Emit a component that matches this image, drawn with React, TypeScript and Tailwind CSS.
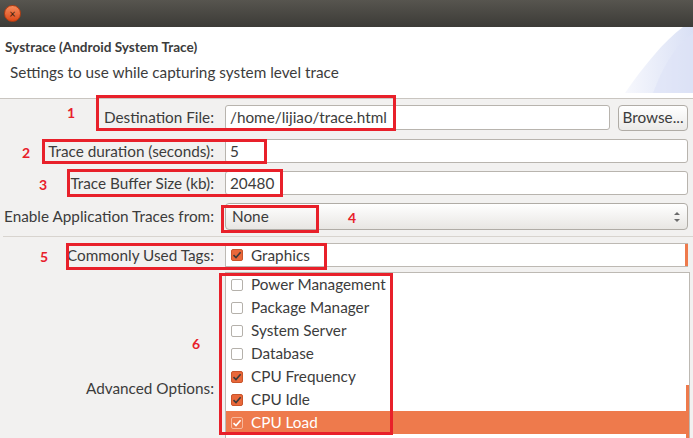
const tags = [
  { name: 'Power Management', checked: false },
  { name: 'Package Manager', checked: false },
  { name: 'System Server', checked: false },
  { name: 'Database', checked: false },
  { name: 'CPU Frequency', checked: true },
  { name: 'CPU Idle', checked: true },
  { name: 'CPU Load', checked: true, selected: true },
];

function Check({ checked, selected }: { checked: boolean; selected?: boolean }) {
  if (!checked) {
    return <span className="w-[12px] h-[12px] rounded-[2px] border border-[#b5b1ab] bg-white shrink-0" />;
  }
  return (
    <span
      className={`w-[12px] h-[12px] rounded-[2px] shrink-0 flex items-center justify-center ${
        selected ? 'bg-[#ee7a4c] border border-[#f7b89c]' : 'bg-[#e9683a] border border-[#c9552b]'
      }`}
    >
      <svg width="10" height="10" viewBox="0 0 10 10">
        <path
          d="M1.5 5.2 L4 7.6 L8.6 2.2"
          fill="none"
          stroke={selected ? '#ffffff' : '#3b3b3b'}
          strokeWidth="1.6"
        />
      </svg>
    </span>
  );
}

function Label({ children }: { children: React.ReactNode }) {
  return <div className="w-[215px] shrink-0 text-right pr-[1px] whitespace-nowrap">{children}</div>;
}

function Mark({ n, className }: { n: string; className: string }) {
  return <span className={`absolute text-[14px] font-bold text-[#e8202a] leading-none ${className}`}>{n}</span>;
}

function Box({ className }: { className: string }) {
  return <div className={`absolute border-[3px] border-[#e8202a] ${className}`} />;
}

function Swoosh() {
  return (
    <svg className="absolute right-0 top-0" width="80" height="72" viewBox="0 0 80 72">
      <defs>
        <linearGradient id="sw" x1="0" y1="0" x2="1" y2="0">
          <stop offset="0" stopColor="#f7f8fd" />
          <stop offset="1" stopColor="#d9e0f5" />
        </linearGradient>
      </defs>
      <path d="M12 66 C 30 40, 50 15, 70 0 L 80 0 L 80 66 Z" fill="url(#sw)" />
      <path d="M40 66 C 50 40, 62 18, 80 6 L 80 66 Z" fill="#dde3f6" opacity="0.6" />
    </svg>
  );
}

export default function App() {
  return (
    <div
      className="relative w-[693px] h-[438px] overflow-hidden bg-[#f2f1f0] text-[#3c3c3c] text-[15.3px]"
      style={{ fontFamily: 'Lato, "Open Sans", sans-serif' }}
    >
      {/* window title bar */}
      <div className="h-[27px] bg-gradient-to-b from-[#57554f] to-[#3c3b37] flex items-center pl-[4px]">
        <div className="w-[17px] h-[17px] rounded-full bg-gradient-to-b from-[#f58a5a] to-[#dd4814] border border-[#b83c10] flex items-center justify-center text-[#3a1a0a] text-[11px] leading-none">
          ×
        </div>
      </div>

      {/* header */}
      <div className="relative h-[72px] bg-white border-b border-[#c9c5c0]">
        <Swoosh />
        <div className="relative pl-[5px] pt-[10px] font-bold text-[13.6px]">Systrace (Android System Trace)</div>
        <div className="relative pl-[10px] pt-[4px]">Settings to use while capturing system level trace</div>
      </div>

      {/* form */}
      <div className="flex flex-col pt-[6px] pr-[5px]">
        <div className="flex items-center gap-[10px] h-[25px]">
          <Label>Destination File:</Label>
          <div className="flex-1 h-[25px] bg-white border border-[#b8b4ae] rounded-[3px] flex items-center px-[4px]">
            /home/lijiao/trace.html
          </div>
          <button className="w-[70px] h-[26px] ml-[-2px] rounded-[4px] border border-[#b0aca6] bg-gradient-to-b from-white to-[#ebeae8]">
            Browse...
          </button>
        </div>

        <div className="flex items-center gap-[10px] h-[24px] mt-[9px]">
          <Label>Trace duration (seconds):</Label>
          <div className="flex-1 h-[24px] bg-white border border-[#b8b4ae] rounded-[3px] flex items-center px-[4px]">5</div>
        </div>

        <div className="flex items-center gap-[10px] h-[24px] mt-[8px]">
          <Label>Trace Buffer Size (kb):</Label>
          <div className="flex-1 h-[24px] bg-white border border-[#b8b4ae] rounded-[3px] flex items-center px-[4px]">20480</div>
        </div>

        <div className="flex items-center gap-[10px] h-[27px] mt-[8px]">
          <Label>Enable Application Traces from:</Label>
          <div className="flex-1 h-[27px] border border-[#b0aca6] rounded-[4px] bg-gradient-to-b from-white to-[#e8e6e3] flex items-center px-[6px] justify-between">
            <span>None</span>
            <svg width="8" height="14" viewBox="0 0 8 14">
              <path d="M1 5 L4 2 L7 5 Z" fill="#6b6b6b" />
              <path d="M1 9 L4 12 L7 9 Z" fill="#6b6b6b" />
            </svg>
          </div>
        </div>

        <div className="h-[1px] bg-[#d8d4cf] mt-[6px] ml-[3px] mr-[-5px]" />

        <div className="flex items-center gap-[10px] h-[24px] mt-[6px]">
          <Label>Commonly Used Tags:</Label>
          <div className="relative flex-1 h-[24px] bg-white border border-[#bdb9b3] flex items-center gap-[8px] pl-[5px]">
            <Check checked />
            <span>Graphics</span>
            <div className="absolute right-[-1px] top-0 bottom-0 w-[3px] bg-[#ee7a4c]" />
          </div>
        </div>

        <div className="flex items-center gap-[10px] mt-[5px] mr-[-2px]">
          <div className="pt-[5px]">
            <Label>Advanced Options:</Label>
          </div>
          <div className="relative flex-1 h-[228px] bg-white border border-[#bdb9b3]">
            {tags.map((t) => (
              <div
                key={t.name}
                className={`h-[23px] flex items-center gap-[8px] pl-[5px] ${
                  t.selected ? 'bg-[#ee7a4c] text-white' : ''
                }`}
              >
                <Check checked={t.checked} selected={t.selected} />
                <span>{t.name}</span>
              </div>
            ))}
            <div className="absolute right-0 top-[112px] h-[120px] w-[3px] bg-[#ee7a4c]" />
          </div>
        </div>
      </div>

      {/* annotations */}
      <Box className="left-[96px] top-[95px] w-[300px] h-[36px]" />
      <Mark n="1" className="left-[67px] top-[106px]" />
      <Box className="left-[42px] top-[139px] w-[225px] h-[25px]" />
      <Mark n="2" className="left-[22px] top-[146px]" />
      <Box className="left-[67px] top-[169px] w-[216px] h-[28px]" />
      <Mark n="3" className="left-[39px] top-[178px]" />
      <Box className="left-[221px] top-[205px] w-[98px] h-[28px]" />
      <Mark n="4" className="left-[348px] top-[211px]" />
      <Box className="left-[66px] top-[243px] w-[261px] h-[27px]" />
      <Mark n="5" className="left-[40px] top-[250px]" />
      <Box className="left-[219px] top-[273px] w-[174px] h-[162px]" />
      <Mark n="6" className="left-[192px] top-[337px]" />
    </div>
  );
}
